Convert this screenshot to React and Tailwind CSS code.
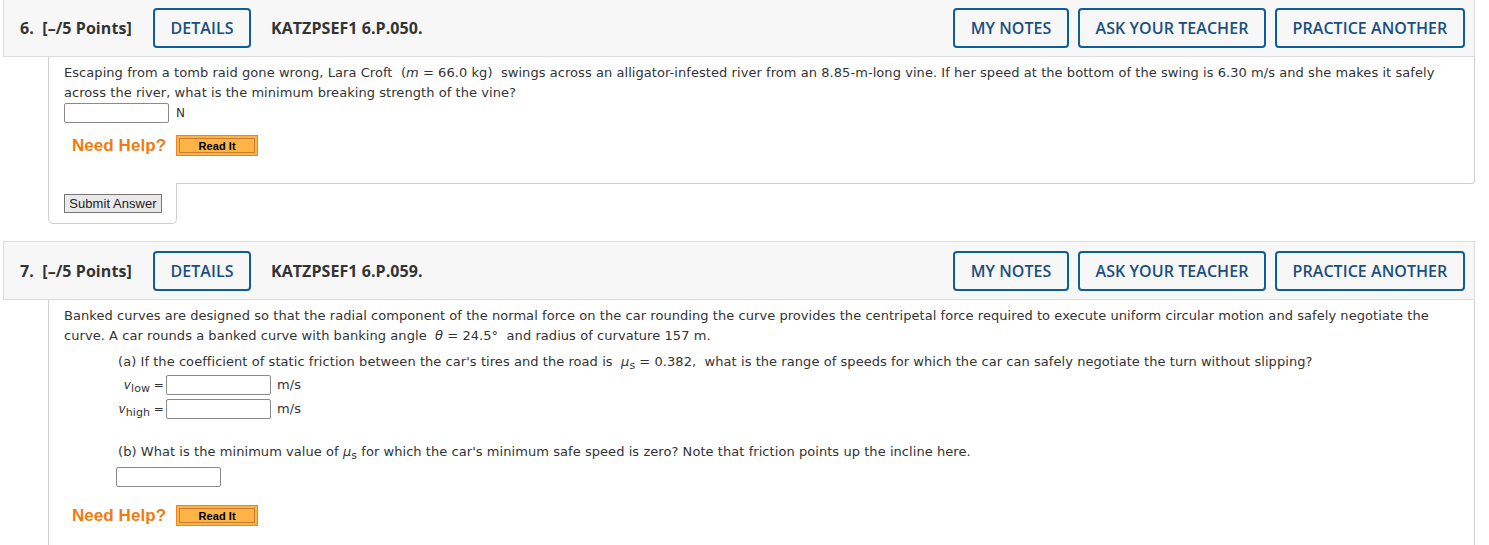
import React from "react";

const head = { fontFamily: '"Open Sans", "Liberation Sans", sans-serif' };
const body = { fontFamily: '"DejaVu Sans", Verdana, sans-serif', letterSpacing: "0.06px" };
const arial = { fontFamily: '"Liberation Sans", Arial, sans-serif' };

function HBtn({ children, w }) {
  return (
    <div
      className={`h-[40px] ${w} border-2 border-[#0e5f98] rounded-[4px] flex items-center justify-center text-[16px] font-semibold text-[#1a4f80]`}
      style={head}
    >
      {children}
    </div>
  );
}

function Header({ num, code }) {
  return (
    <div className="h-[59px] border border-[#dcdcdc] bg-[#f7f7f7] flex items-center pl-[16px] pr-[9px]" style={head}>
      <div className="text-[16px] font-bold text-[#333] w-[133px] whitespace-nowrap">
        {num}.&nbsp; [–/5 Points]
      </div>
      <HBtn w="w-[98px]">DETAILS</HBtn>
      <div className="ml-[20px] text-[16px] font-bold text-[#333]">{code}</div>
      <div className="ml-auto flex gap-[9px]">
        <HBtn w="w-[116px]">MY NOTES</HBtn>
        <HBtn w="w-[188px]">ASK YOUR TEACHER</HBtn>
        <HBtn w="w-[190px]">PRACTICE ANOTHER</HBtn>
      </div>
    </div>
  );
}

function Input({ w = "w-[105px]" }) {
  return <div className={`${w} h-[20px] border border-[#8a8a8a] rounded-[2px] bg-white`} />;
}

function NeedHelp() {
  return (
    <div className="flex items-center pl-[8px]">
      <span className="text-[17px] font-bold text-[#ee7d10]" style={arial}>Need Help?</span>
      <div className="ml-[10px] w-[82px] h-[21px] border border-[#e9842a] bg-[#fcb446] p-[2px]">
        <div className="w-full h-full border border-[#cf7b2a] flex items-center justify-center text-[11px] font-bold text-black" style={arial}>
          Read It
        </div>
      </div>
    </div>
  );
}

const Mu = () => (
  <span>
    <i>μ</i>
    <sub className="text-[11px] relative top-[3px] align-baseline">s</sub>
  </span>
);

export default function App() {
  return (
    <div className="w-[1489px] h-[545px] bg-white overflow-hidden text-[13px] text-[#333]" style={body}>
      <div className="ml-[3px] w-[1472px] -mt-[2px]">
        <Header num="6" code="KATZPSEF1 6.P.050." />
        <div className="ml-[45px] border-l border-r border-b border-[#cfcfcf] rounded-br-[4px] pl-[15px] pr-[20px] pt-[6px] h-[127px] leading-[20px]">
          <div>
            Escaping from a tomb raid gone wrong, Lara Croft&nbsp; (<i>m</i> = 66.0 kg)&nbsp; swings across an alligator-infested river from an 8.85-m-long vine. If her speed at the bottom of the swing is 6.30 m/s and she makes it safely across the river, what is the minimum breaking strength of the vine?
          </div>
          <div className="flex items-center gap-[7px] h-[20px]">
            <Input />
            <span className="text-[12px]">N</span>
          </div>
          <div className="mt-[12px]">
            <NeedHelp />
          </div>
        </div>
        <div className="ml-[45px] -mt-px w-[129px] h-[41px] bg-white border-l border-r border-b border-[#cfcfcf] rounded-b-[5px] pl-[15px] pt-[11px]">
          <div className="w-[98px] h-[19px] bg-[#e9e9e9] border border-[#767676] text-[13px] text-[#222] flex items-center justify-center" style={arial}>
            Submit Answer
          </div>
        </div>

        <div className="mt-[17px]">
          <Header num="7" code="KATZPSEF1 6.P.059." />
          <div className="ml-[45px] border-l border-r border-[#cfcfcf] pl-[15px] pr-[20px] pt-[6px] h-[260px] leading-[20px]">
            <div>
              Banked curves are designed so that the radial component of the normal force on the car rounding the curve provides the centripetal force required to execute uniform circular motion and safely negotiate the curve. A car rounds a banked curve with banking angle&nbsp; <i>θ</i> = 24.5°&nbsp; and radius of curvature 157 m.
            </div>
            <div className="ml-[54px] mt-[6px]">
              <div>
                (a) If the coefficient of static friction between the car's tires and the road is&nbsp; <Mu /> = 0.382,&nbsp; what is the range of speeds for which the car can safely negotiate the turn without slipping?
              </div>
              <div className="mt-[3px] flex flex-col gap-[4px]">
                <div className="flex items-center">
                  <span className="w-[48px] text-right pr-[2px] text-[12px] whitespace-nowrap">
                    <i>v</i><sub className="text-[11px] align-baseline relative top-[3px]">low</sub> =
                  </span>
                  <Input />
                  <span className="ml-[6px]">m/s</span>
                </div>
                <div className="flex items-center">
                  <span className="w-[48px] text-right pr-[2px] text-[12px] whitespace-nowrap">
                    <i>v</i><sub className="text-[11px] align-baseline relative top-[3px]">high</sub> =
                  </span>
                  <Input />
                  <span className="ml-[6px]">m/s</span>
                </div>
              </div>
              <div className="mt-[23px]">
                (b) What is the minimum value of <Mu /> for which the car's minimum safe speed is zero? Note that friction points up the incline here.
              </div>
              <div className="-ml-[2px] mt-[5px]">
                <Input />
              </div>
            </div>
            <div className="mt-[18px]">
              <NeedHelp />
            </div>
          </div>
        </div>
      </div>
    </div>
  );
}
